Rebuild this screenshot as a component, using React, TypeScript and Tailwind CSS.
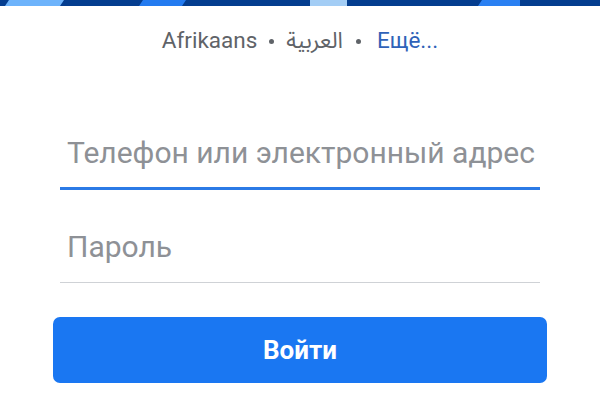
import React from "react";

const font = { fontFamily: "Roboto, 'Noto Sans Arabic', 'DejaVu Sans', sans-serif" };

const TopBanner = () => (
  <svg width="600" height="6" viewBox="0 0 600 6" preserveAspectRatio="none" className="block">
    <rect width="600" height="6" fill="#043d8f" />
    <polygon points="9,0 64,0 60,6 5,6" fill="#6db3fb" />
    <polygon points="143,0 186,0 182,6 139,6" fill="#237bf0" />
    <polygon points="310,0 347,0 347,6 310,6" fill="#a3cdf5" />
    <polygon points="482,0 520,0 520,6 478,6" fill="#2a80f2" />
  </svg>
);

const Dot = ({ className }: { className: string }) => (
  <span className={"inline-block w-[5px] h-[5px] rounded-full bg-[#5f6368] " + className} />
);

export default function App() {
  return (
    <div className="w-[600px] h-[400px] bg-white overflow-hidden" style={font}>
      <TopBanner />
      <div className="mt-[22px] h-[24px] flex items-center justify-center text-[22.5px] leading-[24px] text-[#5f6368]">
        <span>Afrikaans</span>
        <Dot className="mx-[12px] mt-[2px]" />
        <span>العربية</span>
        <Dot className="ml-[13px] mr-[16px] mt-[2px]" />
        <span className="text-[#2f62b8]">Ещё...</span>
      </div>

      <div className="px-[60px]">
        <div className="mt-[84px] pl-[7px] pb-[17px] border-b-[3px] border-[#2b7ae6] text-[30px] leading-[34px] text-[#8e9196]">
          Телефон или электронный адрес
        </div>
        <div className="mt-[40px] pl-[7px] pb-[18px] border-b border-[#cfd2d6] text-[30px] leading-[34px] text-[#8e9196]">
          Пароль
        </div>
      </div>

      <div className="px-[53px] mt-[34px]">
        <button className="w-full h-[66px] rounded-[7px] bg-[#1a77f2] text-white font-bold text-[26px] flex items-center justify-center">
          Войти
        </button>
      </div>
    </div>
  );
}
